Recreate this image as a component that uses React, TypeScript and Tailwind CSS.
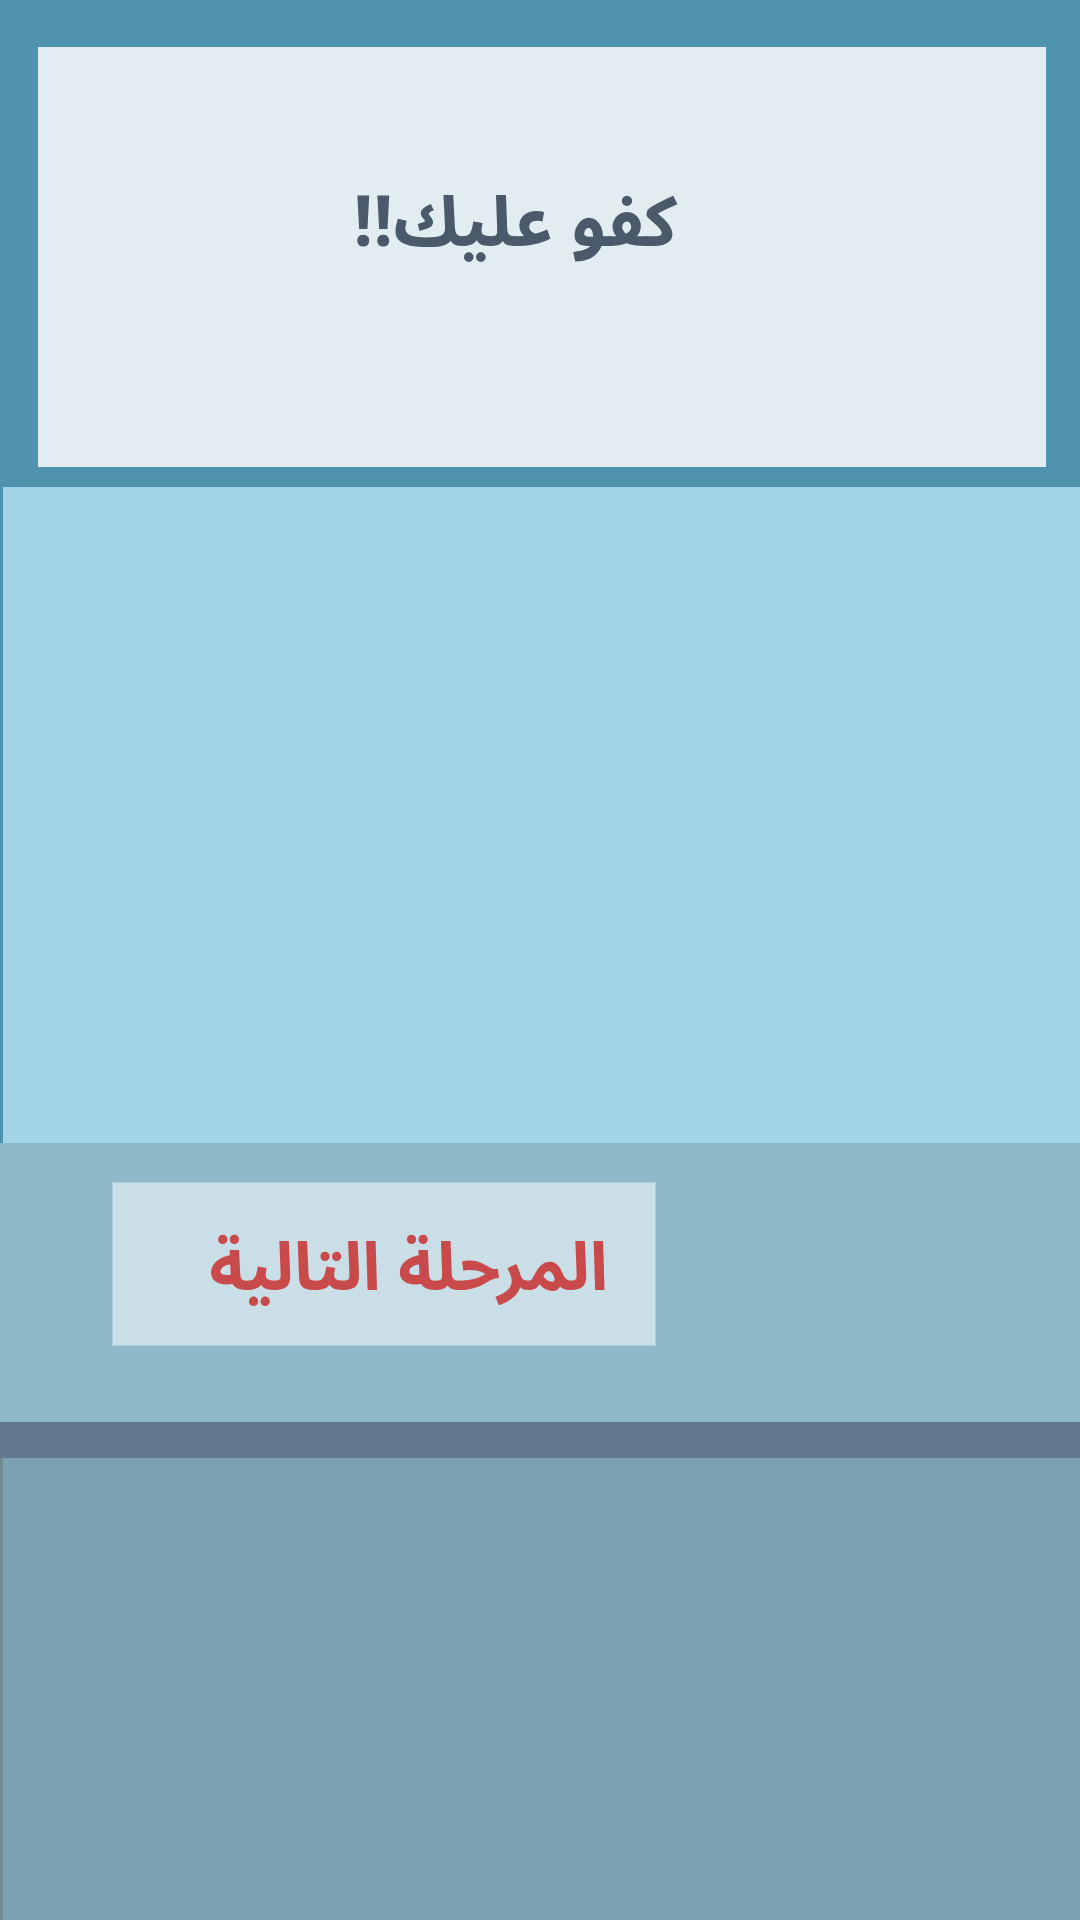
import React from "react";

const App = () => {
  return (
    <div
      className="w-[1080px] h-[1920px] flex flex-col bg-[#7ca1b3]"
      style={{ fontFamily: '"Noto Sans Arabic", "Noto Sans", sans-serif' }}
      dir="rtl"
    >
      <div className="h-[487px] bg-[#5093ae] pt-[47px] pb-[20px] pr-[34px] pl-[38px]">
        <div className="h-[420px] bg-[#e1edf1] flex justify-center pt-[142px]">
          <h1 className="text-[70px] font-bold leading-none text-[#4a5a6b] pr-[54px]">
            كفو عليك!!
          </h1>
        </div>
      </div>

      <div className="h-[656px] bg-[#a2d6e7] border-l-[3px] border-[#5093ae]"></div>

      <div className="h-[279px] bg-[#8fb8ca] pt-[39px] pl-[112px]" dir="ltr">
        <button className="w-[544px] h-[164px] bg-[#c9dee6] border border-[#a9ccdb] flex items-center justify-end pr-[47px] pt-[8px]">
          <span
            dir="rtl"
            className="text-[67px] font-bold leading-none text-[#c94a4a]"
          >
            المرحلة التالية
          </span>
        </button>
      </div>

      <div className="h-[36px] bg-[#62788e]"></div>

      <div className="flex-1 bg-[#7ca1b3] border-l-[3px] border-[#6d8b90]"></div>
    </div>
  );
};

export default App;
